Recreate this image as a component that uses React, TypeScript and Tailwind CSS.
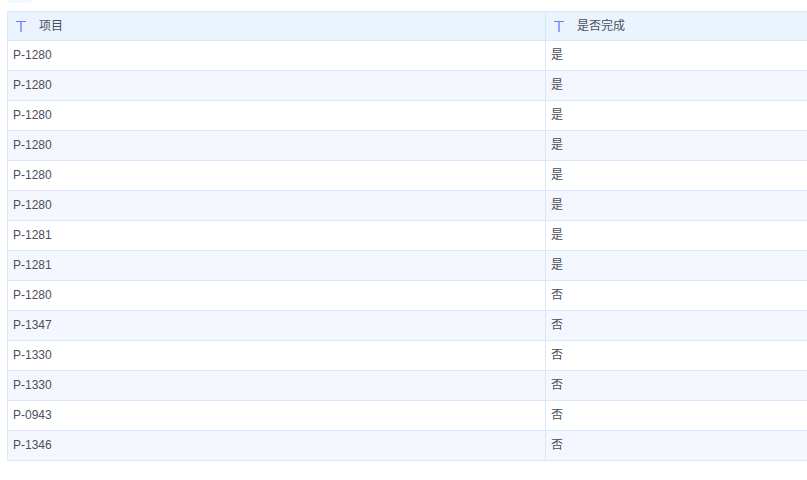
const rows = [
  ['P-1280', '是'],
  ['P-1280', '是'],
  ['P-1280', '是'],
  ['P-1280', '是'],
  ['P-1280', '是'],
  ['P-1280', '是'],
  ['P-1281', '是'],
  ['P-1281', '是'],
  ['P-1280', '否'],
  ['P-1347', '否'],
  ['P-1330', '否'],
  ['P-1330', '否'],
  ['P-0943', '否'],
  ['P-1346', '否'],
]

const TextIcon = () => (
  <svg className="mt-[1px]" width="10" height="11" viewBox="0 0 10 11" fill="none">
    <path d="M0 0.5H10" stroke="#5f82f8" />
    <path d="M5 0.5V11" stroke="#7f8cff" strokeWidth="1.6" />
  </svg>
)

export default function App() {
  return (
    <div className="h-[480px] w-[807px] overflow-hidden bg-white pl-[7px] text-xs text-[#4a4f5c] font-['Liberation_Sans','Noto_Sans_CJK_SC',sans-serif]">
      <div className="h-[3px] w-[24px] bg-[#f3f7fe]" />
      <div className="mt-[8px] border-t border-l border-[#d8e8fc]">
        <div className="flex h-[29px] border-b border-[#d8e8fc] bg-[#ebf3fe]">
          <div className="flex w-[538px] items-center border-r border-[#d8e8fc] pl-[8px]">
            <TextIcon />
            <span className="ml-[13px] mb-[1px]">项目</span>
          </div>
          <div className="flex flex-1 items-center pl-[8px]">
            <TextIcon />
            <span className="ml-[13px] mb-[1px]">是否完成</span>
          </div>
        </div>
        {rows.map((row, i) => (
          <div key={i} className={`flex h-[30px] border-b border-[#d8e8fc] ${i % 2 === 1 ? 'bg-[#f4f8fe]' : 'bg-white'}`}>
            <div className="flex w-[538px] items-center border-r border-[#d8e8fc] pb-[1px] pl-[5px]">{row[0]}</div>
            <div className="flex flex-1 items-center pb-[1px] pl-[5px]">{row[1]}</div>
          </div>
        ))}
      </div>
    </div>
  )
}
